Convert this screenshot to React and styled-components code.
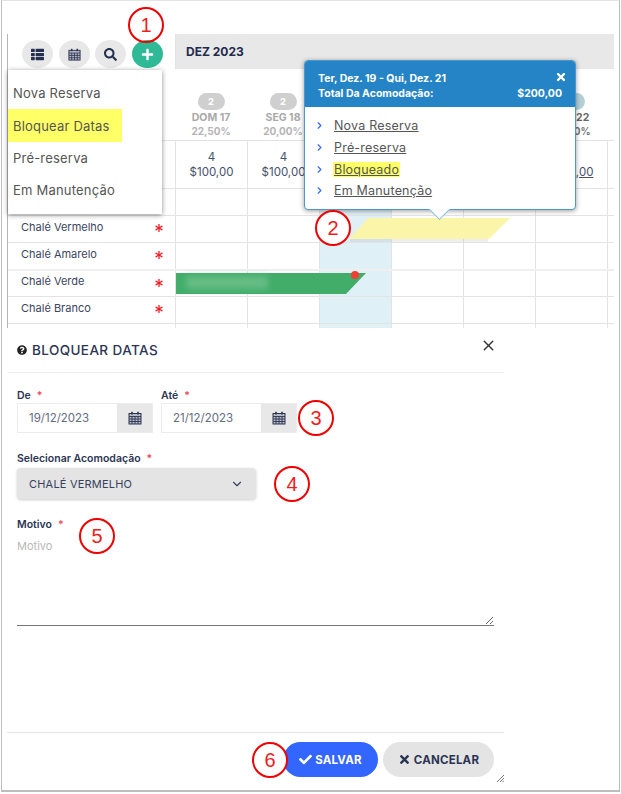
import React from 'react';
import styled, { createGlobalStyle } from 'styled-components';
import { FaThList, FaSearch, FaPlus, FaAsterisk, FaTimes, FaCheck, FaQuestionCircle } from 'react-icons/fa';
import { LuChevronRight, LuChevronDown, LuX } from 'react-icons/lu';

const GlobalStyle = createGlobalStyle`
  html, body {
    margin: 0;
    background: #fff;
    font-family: Inter, "Noto Sans", sans-serif;
    color: #2b3553;
  }
  * {
    box-sizing: border-box;
  }
`;

const Page = styled.div`
  position: relative;
  width: 621px;
  height: 794px;
  padding: 0 1px 2px 1px;
  overflow: hidden;
`;

const Frame = styled.div`
  height: 100%;
  padding: 33px 0 0 5px;
  border: 1px solid #bdbdbd;
  border-width: 1px 1px 2px 1px;
  border-top-color: #e4e4e4;
  display: flex;
  flex-direction: column;
`;

const Scheduler = styled.section`
  width: 607px;
  border-left: 1px solid #b5b5b5;
`;

const Row = styled.div`
  display: grid;
  grid-template-columns: 167px repeat(6, 72px) 7px;
  height: ${(p) => p.$h}px;
  border-top: ${(p) => (p.$line ? `${p.$line}px solid ${p.$color || '#e3e3e3'}` : 'none')};
`;

const Toolbar = styled.div`
  display: flex;
  gap: 5.5px;
  padding: 6px 0 0 14px;
`;

const RoundButton = styled.button`
  width: 31px;
  height: 28px;
  padding: 0;
  border: none;
  border-radius: 50%;
  display: flex;
  align-items: center;
  justify-content: center;
  font-size: 13px;
  color: ${(p) => (p.$add ? '#fff' : '#24304f')};
  background: ${(p) => (p.$add ? '#2fb996' : '#e8e8e8')};
`;

const MonthBar = styled.div`
  grid-column: 2 / -1;
  display: flex;
  align-items: center;
  padding: 0 0 0 10px;
  background: #e8e8e8;
  font-size: 12px;
  font-weight: 700;
  color: #1f2b4d;
  border-left: 1px solid #e3e3e3;
`;

const DayHead = styled.div`
  display: flex;
  flex-direction: column;
  align-items: center;
  padding-top: 24px;
  font-weight: 700;
`;

const Badge = styled.span`
  width: 27px;
  height: 17px;
  border-radius: 9px;
  background: ${(p) => p.$color || '#cfcfcf'};
  color: #fff;
  font-size: 9.5px;
  display: flex;
  align-items: center;
  justify-content: center;
  margin-bottom: 1px;
`;

const DayName = styled.span`
  font-size: 10.5px;
  line-height: 14px;
  color: ${(p) => p.$color || '#a9a9a9'};
`;

const DayRate = styled.span`
  font-size: 10px;
  line-height: 13px;
  color: ${(p) => p.$color || '#b5b5b5'};
`;

const Cell = styled.div`
  border-left: 1px solid #e3e3e3;
  background: ${(p) => (p.$active ? '#dff0f7' : 'transparent')};
  display: flex;
  flex-direction: column;
  align-items: center;
  justify-content: center;
  font-size: 11.5px;
  line-height: 15px;
  color: #46506b;
`;

const Price = styled.span`
  text-decoration: ${(p) => (p.$link ? 'underline' : 'none')};
`;

const NameCell = styled.div`
  display: flex;
  align-items: center;
  justify-content: space-between;
  padding: 0 12px 5px 13px;
  font-size: 11px;
  color: #3a4560;
`;

const Star = styled(FaAsterisk)`
  color: #ee1c25;
  font-size: 8px;
  margin-top: 3px;
`;

const YellowBar = styled.div`
  position: absolute;
  left: 349px;
  top: 218px;
  width: 161px;
  height: 21px;
  background: #fbf5a9;
  clip-path: polygon(19px 0, 100% 0, calc(100% - 21px) 100%, 0 100%);
`;

const BarShadow = styled.div`
  position: absolute;
  left: 350px;
  top: 239px;
  width: 138px;
  height: 3px;
  background: rgba(120, 120, 140, 0.12);
`;

const GreenBar = styled.div`
  position: absolute;
  left: 176px;
  top: 273px;
  width: 190px;
  height: 21px;
  background: #41ad69;
  clip-path: polygon(0 0, 100% 0, calc(100% - 20px) 100%, 0 100%);
`;

const BlurredName = styled.div`
  position: absolute;
  left: 186px;
  top: 276px;
  width: 82px;
  height: 13px;
  background: #66bd86;
  filter: blur(3px);
`;

const RedDot = styled.div`
  position: absolute;
  left: 351px;
  top: 271px;
  width: 8px;
  height: 8px;
  border-radius: 50%;
  background: #ee4035;
`;

const AddMenu = styled.div`
  position: absolute;
  left: 8px;
  top: 70px;
  width: 154px;
  height: 144px;
  padding-top: 7px;
  background: #fff;
  box-shadow: 0 1px 5px rgba(0, 0, 0, 0.45);
`;

const AddMenuItem = styled.div`
  height: ${(p) => (p.$mark ? 33 : 32)}px;
  width: ${(p) => (p.$mark ? 114 : 154)}px;
  padding-left: 5px;
  display: flex;
  align-items: center;
  font-size: 13px;
  letter-spacing: 0.2px;
  color: #555;
  background: ${(p) => (p.$mark ? '#ffff66' : 'transparent')};
`;

const Popover = styled.div`
  position: absolute;
  left: 304px;
  top: 60px;
  width: 272px;
  height: 150px;
  border: 1px solid #4d97cf;
  border-radius: 4px;
  background: #fff;
  box-shadow: 0 1px 5px rgba(0, 0, 0, 0.4);
`;

const PopoverArrow = styled.div`
  position: absolute;
  left: 127px;
  bottom: -8px;
  width: 15px;
  height: 15px;
  background: #fff;
  border: 1px solid #86b9dc;
  border-width: 0 1px 1px 0;
  transform: rotate(45deg);
`;

const PopoverHead = styled.div`
  height: 46px;
  padding: 10px 13px 0 13px;
  background: #2484c6;
  border-radius: 3px 3px 0 0;
  color: #fff;
  font-size: 10.5px;
  font-weight: 700;
  line-height: 15px;
`;

const SpreadLine = styled.div`
  display: flex;
  justify-content: space-between;
  align-items: center;
`;

const PopoverClose = styled(FaTimes)`
  font-size: 12px;
  margin: -4px -5px 0 0;
`;

const PopoverList = styled.ul`
  list-style: none;
  margin: 0;
  padding: 8px 0 0 9px;
`;

const PopoverItem = styled.li`
  display: flex;
  align-items: center;
  height: 21.7px;
  gap: 8px;
  font-size: 12.5px;
  color: #555;
  svg {
    color: #3366ff;
    font-size: 11px;
    stroke-width: 2.5;
  }
`;

const PopoverLink = styled.a`
  text-decoration: underline;
  letter-spacing: 0.2px;
  padding: 0 1px;
  background: ${(p) => (p.$mark ? '#ffff66' : 'transparent')};
`;

const Marker = styled.div`
  position: absolute;
  left: ${(p) => p.$x - 18}px;
  top: ${(p) => p.$y - 18}px;
  width: 36px;
  height: 36px;
  border: 2px solid #f00000;
  border-radius: 50%;
  background: ${(p) => (p.$filled ? '#fff' : 'transparent')};
  color: #ee1c1c;
  font-family: "Liberation Sans", sans-serif;
  font-size: 20px;
  display: flex;
  align-items: center;
  justify-content: center;
`;

const Modal = styled.section`
  position: relative;
  flex: 1;
  width: 497px;
  display: flex;
  flex-direction: column;
  background: #fff;
`;

const ModalHead = styled.header`
  height: 45px;
  padding: 0 7px 0 10px;
  border-bottom: 1px solid #eee;
  display: flex;
  align-items: center;
  justify-content: space-between;
`;

const ModalTitle = styled.h2`
  margin: 0;
  display: flex;
  align-items: center;
  gap: 5px;
  font-size: 13.5px;
  font-weight: 500;
  letter-spacing: 0.4px;
  color: #2b3553;
  svg {
    font-size: 10px;
    color: #222;
  }
`;

const CloseButton = styled(LuX)`
  font-size: 17px;
  color: #333;
  margin: -10px 0 0 0;
`;

const ModalBody = styled.form`
  flex: 1;
  padding: 15px 10px 0 10px;
`;

const DateRow = styled.div`
  display: flex;
  gap: 8px;
  margin-bottom: 18px;
`;

const Label = styled.label`
  display: block;
  height: 15px;
  font-size: 10.5px;
  line-height: 15px;
  font-weight: 600;
  color: #2b3553;
  i {
    font-style: normal;
    color: #ef4b5a;
    margin-left: 6px;
  }
`;

const InputGroup = styled.div`
  display: flex;
  width: 136px;
  height: 30px;
  border: 1px solid #ececec;
`;

const DateInput = styled.input`
  width: 99px;
  border: none;
  outline: none;
  padding: 0 0 0 11px;
  font-family: inherit;
  font-size: 11.5px;
  color: #666c7d;
`;

const Addon = styled.span`
  flex: 1;
  background: #e8e8e8;
  display: flex;
  align-items: center;
  justify-content: center;
`;

const Select = styled.div`
  width: 239px;
  height: 31px;
  margin: 2px 0 18px;
  padding: 0 12px;
  border-radius: 4px;
  background: #e4e4e4;
  box-shadow: 0 1px 3px rgba(0, 0, 0, 0.2);
  display: flex;
  align-items: center;
  justify-content: space-between;
  font-size: 11px;
  letter-spacing: 0.2px;
  color: #36415e;
  svg {
    font-size: 14px;
  }
`;

const TextArea = styled.textarea`
  display: block;
  width: 477px;
  height: 92px;
  margin-top: 2px;
  padding: 3px 0 0;
  border: none;
  border-bottom: 1px solid #777;
  outline: none;
  font-family: inherit;
  font-size: 11px;
  line-height: 18px;
  &::placeholder {
    color: #b8b8b8;
  }
`;

const ModalFoot = styled.footer`
  height: 58px;
  padding: 9px 10px 0 0;
  border-top: 1px solid #e6e6e6;
  display: flex;
  justify-content: flex-end;
  gap: 5px;
`;

const PillButton = styled.button`
  width: ${(p) => (p.$primary ? 95 : 111)}px;
  height: 35px;
  border: none;
  border-radius: 18px;
  display: flex;
  align-items: center;
  justify-content: center;
  gap: 3px;
  font-family: inherit;
  font-size: 11.5px;
  font-weight: 700;
  letter-spacing: 0.2px;
  color: ${(p) => (p.$primary ? '#fff' : '#2b3553')};
  background: ${(p) => (p.$primary ? '#3366ff' : '#e4e4e4')};
  svg {
    font-size: 13px;
  }
`;

const ResizeGrip = styled.svg`
  position: absolute;
  right: 0;
  bottom: 8px;
  width: 8px;
  height: 8px;
`;

// FA4 style calendar, the package one has no grid lines
function CalendarIcon({ size = 14 }) {
  return (
    <svg width={size} height={size} viewBox="0 0 14 14" fill="none" stroke="#2b3553">
      <rect x="1" y="2.5" width="12" height="10.5" fill="#2b3553" fillOpacity="0.25" />
      <path d="M1 5.5h12M1 8h12M1 10.5h12M4 5.5V13M7 5.5V13M10 5.5V13" strokeWidth="0.9" />
      <path d="M4 0.8v2.6M10 0.8v2.6" strokeWidth="1.6" />
    </svg>
  );
}

const columns = [
  { name: 'DOM 17', rate: '22,50%', price: '$100,00' },
  { name: 'SEG 18', rate: '20,00%', price: '$100,00' },
  { active: true },
  {},
  {},
  { name: 'SEX 22', rate: '20,00%', price: '$100,00', link: true, badge: '#b4d0d6', dark: true },
];

const rooms = [
  { h: 27 },
  { h: 27, name: 'Chalé Vermelho' },
  { h: 27, name: 'Chalé Amarelo' },
  { h: 27, name: 'Chalé Verde', line: 2, color: '#efefef' },
  { h: 27, name: 'Chalé Branco' },
  { h: 5 },
];

const menuItems = ['Nova Reserva', 'Bloquear Datas', 'Pré-reserva', 'Em Manutenção'];
const popoverItems = ['Nova Reserva', 'Pré-reserva', 'Bloqueado', 'Em Manutenção'];

function ScheduleGrid() {
  return (
    <Scheduler>
      <Row $h={35}>
        <Toolbar>
          <RoundButton type="button"><FaThList /></RoundButton>
          <RoundButton type="button"><CalendarIcon size={13} /></RoundButton>
          <RoundButton type="button"><FaSearch /></RoundButton>
          <RoundButton type="button" $add><FaPlus /></RoundButton>
        </Toolbar>
        <MonthBar>DEZ 2023</MonthBar>
      </Row>
      <Row $h={71}>
        <div />
        {columns.map((col, i) => (
          <DayHead key={i}>
            {col.name && (
              <>
                <Badge $color={col.badge}>2</Badge>
                <DayName $color={col.dark && '#666'}>{col.name}</DayName>
                <DayRate $color={col.dark && '#777'}>{col.rate}</DayRate>
              </>
            )}
          </DayHead>
        ))}
      </Row>
      <Row $h={48} $line={1}>
        <div />
        {columns.map((col, i) => (
          <Cell key={i} $active={col.active}>
            {col.price && (
              <>
                <span>4</span>
                <Price $link={col.link}>{col.price}</Price>
              </>
            )}
          </Cell>
        ))}
        <Cell />
      </Row>
      {rooms.map((room, r) => (
        <Row key={r} $h={room.h} $line={room.line || 1} $color={room.color}>
          {room.name ? (
            <NameCell>
              {room.name}
              <Star />
            </NameCell>
          ) : (
            <div />
          )}
          {columns.map((col, i) => (
            <Cell key={i} $active={col.active} />
          ))}
          <Cell />
        </Row>
      ))}
    </Scheduler>
  );
}

function BlockDatesModal() {
  return (
    <Modal>
      <ModalHead>
        <ModalTitle>
          <FaQuestionCircle />
          BLOQUEAR DATAS
        </ModalTitle>
        <CloseButton />
      </ModalHead>
      <ModalBody>
        <DateRow>
          <div>
            <Label>De<i>*</i></Label>
            <InputGroup>
              <DateInput readOnly value="19/12/2023" />
              <Addon><CalendarIcon /></Addon>
            </InputGroup>
          </div>
          <div>
            <Label>Até<i>*</i></Label>
            <InputGroup>
              <DateInput readOnly value="21/12/2023" />
              <Addon><CalendarIcon /></Addon>
            </InputGroup>
          </div>
        </DateRow>
        <Label>Selecionar Acomodação<i>*</i></Label>
        <Select>
          CHALÉ VERMELHO
          <LuChevronDown />
        </Select>
        <Label>Motivo<i>*</i></Label>
        <TextArea placeholder="Motivo" />
      </ModalBody>
      <ModalFoot>
        <PillButton type="button" $primary><FaCheck />SALVAR</PillButton>
        <PillButton type="button"><FaTimes />CANCELAR</PillButton>
      </ModalFoot>
      <ResizeGrip viewBox="0 0 8 8">
        <path d="M1 8L8 1M4 8L8 4M6.5 8L8 6.5" stroke="#777" strokeWidth="1" />
      </ResizeGrip>
    </Modal>
  );
}

export default function App() {
  return (
    <Page>
      <GlobalStyle />
      <Frame>
        <ScheduleGrid />
        <BlockDatesModal />
      </Frame>

      <BarShadow />
      <YellowBar />
      <GreenBar />
      <BlurredName />
      <RedDot />

      <AddMenu>
        {menuItems.map((item) => (
          <AddMenuItem key={item} $mark={item === 'Bloquear Datas'}>{item}</AddMenuItem>
        ))}
      </AddMenu>

      <Popover>
        <PopoverArrow />
        <PopoverHead>
          <SpreadLine>
            <span>Ter, Dez. 19 - Qui, Dez. 21</span>
            <PopoverClose />
          </SpreadLine>
          <SpreadLine>
            <span>Total Da Acomodação:</span>
            <span>$200,00</span>
          </SpreadLine>
        </PopoverHead>
        <PopoverList>
          {popoverItems.map((item) => (
            <PopoverItem key={item}>
              <LuChevronRight />
              <PopoverLink $mark={item === 'Bloqueado'}>{item}</PopoverLink>
            </PopoverItem>
          ))}
        </PopoverList>
      </Popover>

      <Marker $x={146} $y={25}>1</Marker>
      <Marker $x={333} $y={228} $filled>2</Marker>
      <Marker $x={316} $y={418}>3</Marker>
      <Marker $x={292} $y={484}>4</Marker>
      <Marker $x={97} $y={536}>5</Marker>
      <Marker $x={270} $y={760} $filled>6</Marker>
    </Page>
  );
}
